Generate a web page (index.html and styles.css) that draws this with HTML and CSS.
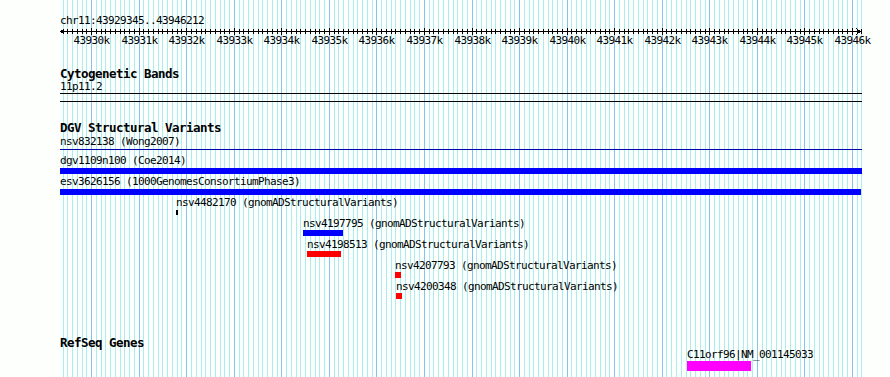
FILE: index.html
```html
<!DOCTYPE html>
<html lang="en">
<head>
  <meta charset="UTF-8">
  <title>chr11:43929345..43946212</title>
  <link rel="stylesheet" href="styles.css">
</head>
<body>
  <div class="browser" id="browser" data-start="43929345" data-end="43946212">
    <svg class="grid" id="grid" aria-hidden="true"></svg>

    <div class="ruler">
      <div class="chrom">chr11:43929345..43946212</div>
      <svg class="axis" id="axis" width="804" height="10"></svg>
      <div class="tick-labels" id="tickLabels"></div>
    </div>

    <section class="track cyto">
      <h2>Cytogenetic Bands</h2>
      <div class="band">11p11.2</div>
      <div class="rule"></div>
      <div class="rule"></div>
    </section>

    <section class="track dgv">
      <h2>DGV Structural Variants</h2>
      <div class="row row-first">
        <div class="feature" data-start="43929345" data-end="43946212">
          <span class="label">nsv832138 (Wong2007)</span>
          <div class="glyph line"></div>
        </div>
      </div>
      <div class="row row-wide">
        <div class="feature" data-start="43929345" data-end="43946212">
          <span class="label">dgv1109n100 (Coe2014)</span>
          <div class="glyph bar blue"></div>
        </div>
      </div>
      <div class="row row-wide">
        <div class="feature" data-start="43929345" data-end="43946190">
          <span class="label">esv3626156 (1000GenomesConsortiumPhase3)</span>
          <div class="glyph bar blue"></div>
        </div>
      </div>
      <div class="row">
        <div class="feature" data-start="43931785" data-end="43931827">
          <span class="label">nsv4482170 (gnomADStructuralVariants)</span>
          <div class="glyph mark"></div>
        </div>
      </div>
      <div class="row">
        <div class="feature" data-start="43934455" data-end="43935297">
          <span class="label">nsv4197795 (gnomADStructuralVariants)</span>
          <div class="glyph bar blue"></div>
        </div>
      </div>
      <div class="row">
        <div class="feature" data-start="43934540" data-end="43935255">
          <span class="label">nsv4198513 (gnomADStructuralVariants)</span>
          <div class="glyph bar red"></div>
        </div>
      </div>
      <div class="row">
        <div class="feature" data-start="43936390" data-end="43936516">
          <span class="label">nsv4207793 (gnomADStructuralVariants)</span>
          <div class="glyph bar red"></div>
        </div>
      </div>
      <div class="row">
        <div class="feature" data-start="43936411" data-end="43936537">
          <span class="label">nsv4200348 (gnomADStructuralVariants)</span>
          <div class="glyph bar red"></div>
        </div>
      </div>
    </section>

    <section class="track refseq">
      <h2>RefSeq Genes</h2>
      <div class="row">
        <div class="feature" data-start="43942532" data-end="43943878">
          <span class="label">C11orf96|NM_001145033</span>
          <div class="glyph gene"></div>
        </div>
      </div>
    </section>
  </div>

  <script src="script.js"></script>
</body>
</html>
```

FILE: styles.css
```css
body {
  margin: 0;
  background: #fcfffc;
  font-family: "DejaVu Sans Mono", "Liberation Mono", monospace;
  font-size: 11px;
  letter-spacing: -0.62px;
  color: #000;
}
.browser {
  position: relative;
  z-index: 0;
  width: 802px;
  height: 377px;
  margin-left: 60px;
}
.grid {
  position: absolute;
  top: 0;
  left: 0;
  width: 802px;
  height: 100%;
  z-index: -1;
}
.grid .minor {
  fill: #aaecf0;
}
.grid .major {
  fill: #88c2ee;
}

/* small labels sit one pixel low in their box */
.chrom,
.label {
  padding-top: 1px;
  margin-bottom: -1px;
}

/* ruler */
.ruler {
  padding-top: 14px;
}
.chrom {
  line-height: 12px;
}
.axis {
  display: block;
}
.axis line,
.axis path {
  stroke: #000;
  stroke-width: 1;
  fill: none;
  shape-rendering: crispEdges;
}
.tick-labels {
  position: relative;
  height: 12px;
  margin-top: -2px;
  line-height: 12px;
}
.tick-labels span {
  position: absolute;
  top: 1px;
  transform: translateX(-50%);
  white-space: nowrap;
}

/* tracks */
h2 {
  margin: 0;
  padding-bottom: 1px;
  font-size: 12.5px;
  letter-spacing: -0.53px;
  font-weight: bold;
  line-height: 12px;
}
.cyto h2 {
  margin-top: 22px;
}
.dgv h2 {
  margin-top: 20px;
}
.refseq h2 {
  margin-top: 36px;
}
.band {
  line-height: 12px;
}
.rule {
  height: 1px;
  background: #000;
}
.rule + .rule {
  margin-top: 7px;
}

.row {
  height: 21px;
}
.row-first {
  height: 19px;
}
.refseq .row {
  margin-top: -2px;
}
.feature {
  white-space: nowrap;
}
.label {
  display: block;
  line-height: 12px;
}
.glyph {
  margin-top: 1px;
  height: 6px;
}
.row-wide .glyph {
  margin-top: 2px;
}
.glyph.line {
  margin-top: 2px;
  height: 1px;
  background: #0000a8;
}
.glyph.mark {
  margin-top: 2px;
  height: 5px;
  background: #000;
}
.bar.blue {
  background: #0000ff;
}
.bar.red {
  background: #ff0000;
}
.glyph.gene {
  height: 10px;
  background: #ff00ff;
}
```

FILE: script.js
```js
const browser = document.getElementById('browser');
const START = Number(browser.dataset.start);
const END = Number(browser.dataset.end);
const WIDTH = 802;
const SVG_NS = 'http://www.w3.org/2000/svg';

const toX = bp => Math.round((bp - START) * WIDTH / (END - START));

function svgEl(name, attrs) {
  const el = document.createElementNS(SVG_NS, name);
  for (const key in attrs) el.setAttribute(key, attrs[key]);
  return el;
}

const grid = document.getElementById('grid');
const axis = document.getElementById('axis');
const tickLabels = document.getElementById('tickLabels');

// axis line with an arrow at each end
axis.appendChild(svgEl('line', { x1: 0, y1: 5.5, x2: WIDTH - 2, y2: 5.5 }));
axis.appendChild(svgEl('path', { d: 'M4.5 2.5 L1 5.5 L4.5 8.5' }));
axis.appendChild(svgEl('path', {
  d: `M${WIDTH - 5.5} 2.5 L${WIDTH - 2} 5.5 L${WIDTH - 5.5} 8.5`
}));

// grid lines and ticks every 100 bp, darker every kb
for (let bp = Math.ceil(START / 100) * 100; bp <= END; bp += 100) {
  const x = toX(bp);
  const major = bp % 1000 === 0;
  grid.appendChild(svgEl('rect', {
    x: x, y: 0, width: 1, height: 400,
    class: major ? 'major' : 'minor'
  }));
  axis.appendChild(svgEl('line', {
    x1: x + 0.5, y1: major ? 2 : 3, x2: x + 0.5, y2: major ? 9 : 8
  }));
  if (major) {
    const label = document.createElement('span');
    label.textContent = (bp / 1000) + 'k';
    label.style.left = (x + 0.5) + 'px';
    tickLabels.appendChild(label);
  }
}

// place features by genomic coordinate
document.querySelectorAll('.feature').forEach(feature => {
  const left = toX(Number(feature.dataset.start));
  const right = toX(Number(feature.dataset.end));
  feature.style.marginLeft = left + 'px';
  feature.querySelector('.glyph').style.width = Math.max(right - left, 1) + 'px';
});
```
